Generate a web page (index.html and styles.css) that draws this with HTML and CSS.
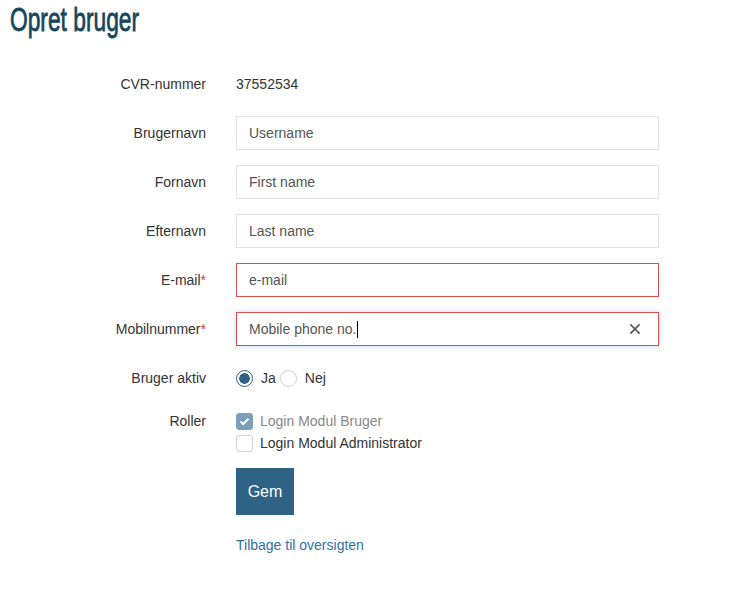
FILE: index.html
```html
<!DOCTYPE html>
<html lang="da">
<head>
<meta charset="utf-8">
<title>Opret bruger</title>
<link rel="stylesheet" href="styles.css">
</head>
<body>
<div class="page">
  <h1 class="title">Opret bruger</h1>
  <form class="form">
    <div class="label">CVR-nummer</div>
    <div class="value">37552534</div>

    <label class="label" for="u">Brugernavn</label>
    <input class="field" id="u" type="text" placeholder="Username">

    <label class="label" for="f">Fornavn</label>
    <input class="field" id="f" type="text" placeholder="First name">

    <label class="label" for="l">Efternavn</label>
    <input class="field" id="l" type="text" placeholder="Last name">

    <label class="label" for="e">E-mail<span class="req">*</span></label>
    <input class="field error" id="e" type="text" placeholder="e-mail">

    <div class="label">Mobilnummer<span class="req">*</span></div>
    <div class="field error focused">
      <span class="typed">Mobile phone no.</span><span class="caret"></span>
      <span class="clear" aria-label="Ryd">
        <svg width="10" height="10" viewBox="0 0 10 10"><path d="M1 1 L9 9 M9 1 L1 9" stroke="#555" stroke-width="1.7" fill="none" stroke-linecap="square"/></svg>
      </span>
    </div>

    <div class="label">Bruger aktiv</div>
    <div class="radios">
      <span class="radio on"></span><span class="rlabel">Ja</span>
      <span class="radio"></span><span class="rlabel">Nej</span>
    </div>

    <div class="label top">Roller</div>
    <div class="checks">
      <div class="check-row disabled"><span class="box on"><svg width="11" height="9" viewBox="0 0 11 9"><path d="M1.5 4.5 L4.2 7 L9.5 1.8" stroke="#fff" stroke-width="2" fill="none"/></svg></span><span>Login Modul Bruger</span></div>
      <div class="check-row"><span class="box"></span><span>Login Modul Administrator</span></div>
    </div>

    <div></div>
    <div class="actions">
      <button class="btn" type="button">Gem</button>
      <a class="back" href="#">Tilbage til oversigten</a>
    </div>
  </form>
</div>
</body>
</html>
```
FILE: styles.css
```css
html, body {
  margin: 0;
  padding: 0;
  background: #fff;
}
body {
  font-family: "Liberation Sans", Arial, sans-serif;
  font-size: 14px;
  color: #333;
}
.page {
  padding: 0 10px;
}
.title {
  margin: 0;
  font-family: "Liberation Sans", sans-serif;
  font-weight: normal;
  font-size: 33px;
  line-height: 40px;
  color: #17465c;
  transform: scaleX(0.69);
  transform-origin: left center;
  -webkit-text-stroke: 0.8px #17465c;
  white-space: nowrap;
}
.form {
  margin-top: 27px;
  display: grid;
  grid-template-columns: 196px 423px;
  column-gap: 30px;
  row-gap: 15px;
}
.label {
  text-align: right;
  line-height: 34px;
  height: 34px;
}
.label.top {
  line-height: 22px;
  height: 22px;
}
.req {
  color: #e0312f;
}
.value {
  line-height: 34px;
}
.field {
  box-sizing: border-box;
  height: 34px;
  width: 423px;
  border: 1px solid #e4e4e4;
  padding: 0 12px;
  font-family: "Liberation Sans", Arial, sans-serif;
  font-size: 14px;
  color: #555;
  background: #fff;
  outline: none;
  margin: 0;
}
.field::placeholder {
  color: #555;
  opacity: 1;
}
.field.error {
  border-color: #db4d4a;
}
.field.focused {
  display: flex;
  align-items: center;
  box-shadow: 0 0 6px rgba(102, 170, 235, 0.45);
}
.typed {
  white-space: pre;
}
.caret {
  display: inline-block;
  width: 1px;
  height: 17px;
  background: #000;
  margin-left: 1px;
}
.clear {
  margin-left: auto;
  margin-right: 6px;
  display: flex;
  align-items: center;
}
.radios {
  display: flex;
  align-items: center;
  height: 34px;
}
.radio {
  box-sizing: border-box;
  width: 17px;
  height: 17px;
  border-radius: 50%;
  border: 1px solid #d0d0d0;
  background: #fff;
}
.radio.on {
  border: 1px solid #2c5f80;
  background: radial-gradient(circle, #2e6385 0 5px, #fff 5.5px);
}
.rlabel {
  margin-left: 8px;
  margin-right: 4px;
}
.checks {
  display: flex;
  flex-direction: column;
}
.check-row {
  display: flex;
  align-items: center;
  height: 22px;
}
.check-row.disabled {
  color: #888;
}
.box {
  box-sizing: border-box;
  width: 17px;
  height: 17px;
  border-radius: 3px;
  border: 1px solid #d3d3d3;
  background: #fff;
  margin-right: 7px;
  display: flex;
  align-items: center;
  justify-content: center;
}
.box.on {
  border-color: #7d9fb7;
  background: #7d9fb7;
}
.actions {
  display: flex;
  flex-direction: column;
  align-items: flex-start;
}
.btn {
  width: 58px;
  height: 47px;
  border: 0;
  border-radius: 0;
  background: #2e6385;
  color: #fff;
  font-family: "Liberation Sans", Arial, sans-serif;
  font-size: 16px;
  padding: 0;
  margin: -1px 0 0;
}
.back {
  margin-top: 20px;
  line-height: 20px;
  color: #2f70a9;
  text-decoration: none;
}
```
